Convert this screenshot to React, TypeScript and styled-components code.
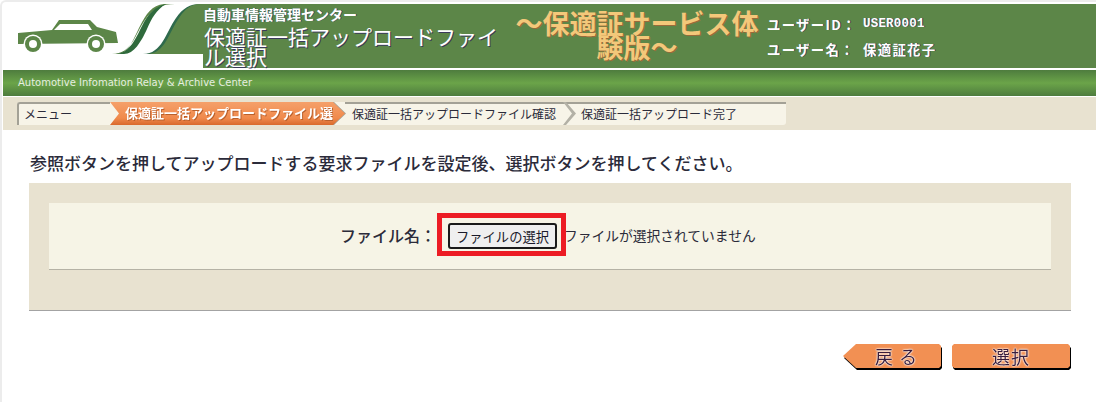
import styled, { createGlobalStyle } from "styled-components"

const GlobalStyle = createGlobalStyle`
    html, body {
        margin: 0;
        padding: 0;
        background: #fff;
    }
    body {
        font-family: "Noto Sans CJK JP", "Liberation Sans", sans-serif;
        color: #2b2b3a;
    }
`

const Shell = styled.div`
    box-sizing: border-box;
    width: 1096px;
    height: 402px;
    overflow: hidden;
    border-top: 2px solid #ececec;
    border-left: 2px solid #ececec;
    border-top-left-radius: 6px;
    padding: 2px 0 0 1px;
`

const Header = styled.header`
    display: flex;
    height: 64px;
    background: #5c8648;
    color: #fff;
    border-bottom: 1px solid #fff;
`

const Logo = styled.svg`
    flex: none;
    display: block;
    width: 200px;
    height: 64px;
`

const TitleBlock = styled.div`
    flex: none;
    width: 309px;
`

const Company = styled.div`
    font-size: 14px;
    font-weight: bold;
    line-height: 18px;
    margin-top: 1px;
    text-shadow: 1px 0 0 #2c4a6a;
`

const PageTitle = styled.h1`
    margin: 3px 0 0 1px;
    width: 296px;
    font-size: 21px;
    font-weight: normal;
    line-height: 20px;
    text-shadow: 1px 1px 0 #3a3a5a;
`

const Trial = styled.div`
    flex: none;
    width: 250px;
    margin-top: 7px;
    text-align: center;
    font-size: 27px;
    font-weight: bold;
    line-height: 24px;
    color: #f3c87a;
    text-shadow: 1px 1px 0 #9a6a3a;
`

const UserInfo = styled.dl`
    margin: 7px 0 0 5px;
    display: grid;
    grid-template-columns: 96px auto;
    grid-auto-rows: 25px;
    align-items: center;
    font-size: 13.4px;
    font-weight: bold;
    letter-spacing: 1.3px;
    text-shadow: 1px 0 0 #3a3a5a;

    dt, dd {
        margin: 0;
        white-space: nowrap;
    }
`

const UserId = styled.dd`
    font-family: "Liberation Mono", monospace;
    font-size: 12.5px;
    letter-spacing: 0.2px;
`

const Band = styled.div`
    height: 25px;
    margin-top: 1px;
    padding: 0 0 1px 15px;
    display: flex;
    align-items: center;
    background: linear-gradient(#4e7c3e 0%, #6ba449 50%, #4e7c3e 100%);
    border-bottom: 1px solid #fff;
    color: #e6eee0;
    font-family: "DejaVu Sans", sans-serif;
    font-size: 10px;
`

const CrumbBar = styled.nav`
    padding: 5px 0 5px 14px;
    background: #e8e2d0;
`

const CrumbTrack = styled.div`
    display: flex;
    width: 769px;
    height: 23px;
    background: #f7f4e8;
    border-radius: 3px;
`

const Crumb = styled.div<{ $width: number; $inset: number; $first?: boolean; $chevron?: boolean }>`
    position: relative;
    box-sizing: border-box;
    flex: none;
    width: ${(p) => p.$width}px;
    height: 23px;
    padding-left: ${(p) => p.$inset}px;
    border-top: 2px solid #a3a196;
    border-left: ${(p) => (p.$first ? "2px solid #a3a196" : "none")};
    border-top-left-radius: ${(p) => (p.$first ? "3px" : "0")};
    font-size: 12px;
    line-height: 20px;
    white-space: nowrap;

    &::after {
        content: ${(p) => (p.$chevron ? '""' : "none")};
        position: absolute;
        top: -2px;
        right: 0;
        width: 13px;
        height: 23px;
        background: #b3b1a6;
        clip-path: polygon(0 0, 3px 0, 100% 50%, 3px 100%, 0 100%, 9px 50%);
    }
`

const ActiveLift = styled.div`
    flex: none;
    filter: drop-shadow(1px 0 0 #a3a196);
`

const ActiveCrumb = styled.div`
    box-sizing: border-box;
    width: 235px;
    height: 23px;
    padding-left: 15px;
    background: linear-gradient(#f5a06a 0%, #f08a4c 70%, #d9692c 100%);
    clip-path: polygon(0 0, calc(100% - 12px) 0, 100% 50%, calc(100% - 12px) 100%, 0 100%, 9px 50%);
    color: #fff;
    font-size: 13px;
    font-weight: bold;
    line-height: 22px;
    text-shadow: 1px 1px 0 #b9602c;
`

const ActiveLabel = styled.span`
    display: block;
    width: 208px;
    overflow: hidden;
    white-space: nowrap;
`

const Main = styled.main`
    padding: 22px 25px 0 26px;
`

const Lead = styled.p`
    margin: 0 0 10px 1px;
    font-size: 17px;
    font-weight: 500;
    line-height: 21px;
    white-space: nowrap;
`

const Panel = styled.section`
    padding: 20px 20px 40px;
    background: #e8e2d0;
    border-bottom: 1px solid #a3a3a3;
`

const FileRow = styled.div`
    box-sizing: border-box;
    display: flex;
    align-items: center;
    height: 67px;
    padding: 0 0 3px 291px;
    background: #f6f4e6;
    border-bottom: 1px solid #b5b2a5;
`

const FileLabel = styled.span`
    width: 97px;
    font-size: 16px;
    font-weight: 500;
    white-space: nowrap;
`

const Highlight = styled.span`
    box-sizing: border-box;
    display: flex;
    align-items: center;
    justify-content: center;
    flex: none;
    width: 129px;
    height: 43px;
    padding: 3px 0 0 2px;
    border: 5px solid #ec1c24;
`

const PickButton = styled.button`
    box-sizing: border-box;
    width: 109px;
    height: 26px;
    padding: 0;
    background: #efefef;
    border: 2px solid #1a1a1a;
    border-radius: 3px;
    font-family: inherit;
    font-size: 13.3px;
    color: #1a1a2a;
`

const FileStatus = styled.span`
    margin-left: -2px;
    font-size: 13.75px;
    white-space: nowrap;
`

const Actions = styled.div`
    display: flex;
    justify-content: flex-end;
    gap: 11px;
    margin-top: 33px;
    padding-right: 1px;
`

const Lift = styled.span`
    display: block;
    filter: drop-shadow(1px 2px 0 #000);
`

const ActionButton = styled.button<{ $back?: boolean; $width: number }>`
    display: block;
    box-sizing: border-box;
    width: ${(p) => p.$width}px;
    height: 24px;
    padding: ${(p) => (p.$back ? "0 0 0 9px" : "0")};
    border: none;
    background: #f29053;
    clip-path: ${(p) =>
        p.$back
            ? "polygon(0 50%, 13px 0, calc(100% - 2px) 0, 100% 2px, 100% calc(100% - 2px), calc(100% - 2px) 100%, 13px 100%)"
            : "polygon(2px 0, calc(100% - 2px) 0, 100% 2px, 100% calc(100% - 2px), calc(100% - 2px) 100%, 2px 100%, 0 calc(100% - 2px), 0 2px)"};
    font-family: inherit;
    font-size: 18px;
    line-height: 24px;
    letter-spacing: 1px;
    color: #3a1c3a;
    text-shadow: 0 0 2px #fff, 0 0 2px #fff, 0 0 1px #fff;
`

const App = () => {
    return (
        <>
            <GlobalStyle />
            <Shell>
                <Header>
                    <Logo viewBox="3 4 200 64" aria-label="logo">
                        <rect x="3" y="4" width="200" height="64" fill="#fff" />
                        <path d="M18 33 L52 30 L59 20 L90 20 L97 27 L116 32 L118 43 L18 44 Z" fill="#5c8648" />
                        <path d="M54 30 L60 24 L88 24 L92 30 Z" fill="#fff" />
                        <circle cx="33" cy="44" r="9.5" fill="#fff" />
                        <circle cx="33" cy="44" r="8" fill="#5c8648" />
                        <circle cx="33" cy="44" r="4" fill="#fff" />
                        <circle cx="96" cy="44" r="9.5" fill="#fff" />
                        <circle cx="96" cy="44" r="8" fill="#5c8648" />
                        <circle cx="96" cy="44" r="4" fill="#fff" />
                        <path d="M112 54 C132 54 135 34 145 20 C153 8 162 4 175 4 L164 4 C152 5 146 14 140 26 C133 40 128 54 118 54 Z" fill="#5c8648" />
                        <path d="M116 54 C130 53 136 38 142 26 C148 14 154 7 166 4 C156 10 152 18 147 29 C141 42 134 54 124 54 Z" fill="#2f6a3c" />
                        <path d="M143 54 C162 54 166 32 176 18 C183 8 190 4 200 4 L204 4 L204 54 Z" fill="#2f6a4c" />
                        <path d="M147 54 C165 54 169 32 179 18 C185 9 191 4 200 4 L204 4 L204 54 Z" fill="#5c8648" />
                    </Logo>
                    <TitleBlock>
                        <Company>自動車情報管理センター</Company>
                        <PageTitle>保適証一括アップロードファイル選択</PageTitle>
                    </TitleBlock>
                    <Trial>～保適証サービス体験版～</Trial>
                    <UserInfo>
                        <dt>ユーザーID：</dt>
                        <UserId>USER0001</UserId>
                        <dt>ユーザー名：</dt>
                        <dd>保適証花子</dd>
                    </UserInfo>
                </Header>
                <Band>Automotive Infomation Relay &amp; Archive Center</Band>
                <CrumbBar>
                    <CrumbTrack>
                        <Crumb $first $width={93} $inset={5}>メニュー</Crumb>
                        <ActiveLift>
                            <ActiveCrumb>
                                <ActiveLabel>保適証一括アップロードファイル選択</ActiveLabel>
                            </ActiveCrumb>
                        </ActiveLift>
                        <Crumb $chevron $width={231} $inset={7}>保適証一括アップロードファイル確認</Crumb>
                        <Crumb $width={210} $inset={5}>保適証一括アップロード完了</Crumb>
                    </CrumbTrack>
                </CrumbBar>
                <Main>
                    <Lead>参照ボタンを押してアップロードする要求ファイルを設定後、選択ボタンを押してください。</Lead>
                    <Panel>
                        <FileRow>
                            <FileLabel>ファイル名：</FileLabel>
                            <Highlight>
                                <PickButton type="button">ファイルの選択</PickButton>
                            </Highlight>
                            <FileStatus>ファイルが選択されていません</FileStatus>
                        </FileRow>
                    </Panel>
                    <Actions>
                        <Lift>
                            <ActionButton type="button" $back $width={98}>戻 る</ActionButton>
                        </Lift>
                        <Lift>
                            <ActionButton type="button" $width={118}>選択</ActionButton>
                        </Lift>
                    </Actions>
                </Main>
            </Shell>
        </>
    )
}

export default App
